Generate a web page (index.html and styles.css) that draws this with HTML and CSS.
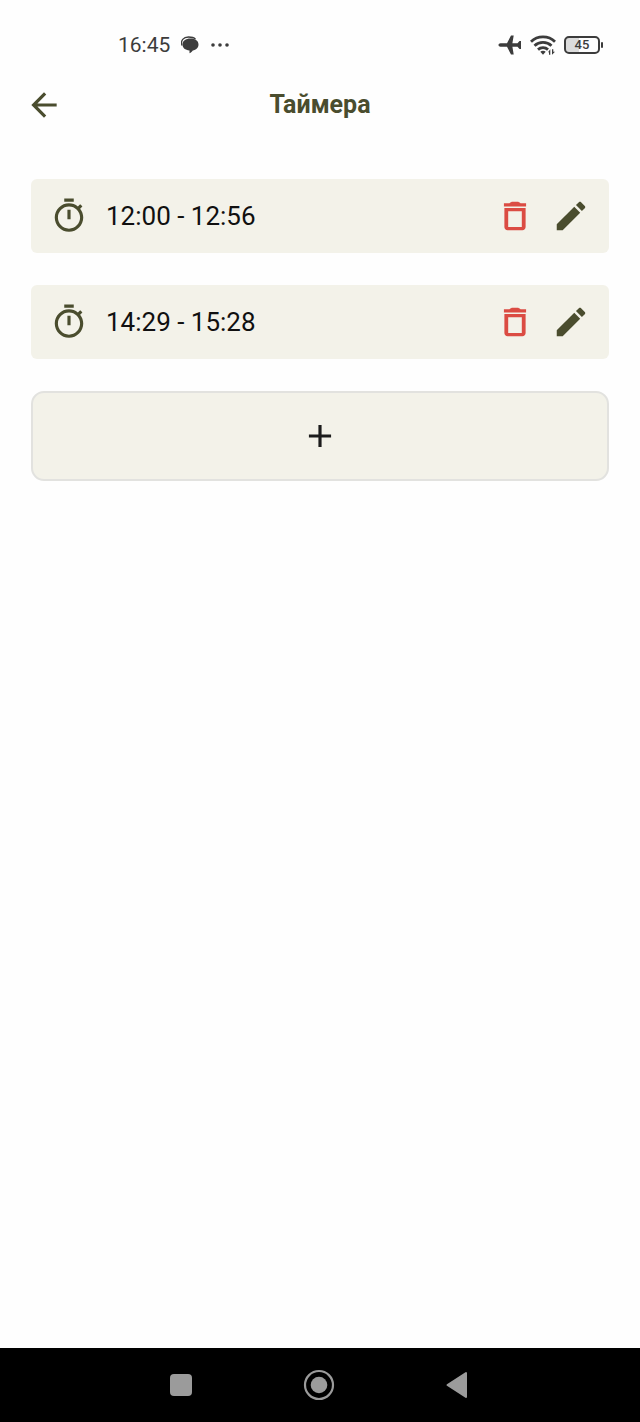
FILE: index.html
```html
<!DOCTYPE html>
<html lang="ru">
<head>
<meta charset="utf-8">
<meta name="viewport" content="width=device-width, initial-scale=1">
<title>Таймера</title>
<link rel="stylesheet" href="styles.css">
</head>
<body>
<div class="status">
  <div class="status-group">
    <span class="clock">16:45</span>
    <svg class="chat" viewBox="0 0 18 18" aria-hidden="true"><path d="M1 9.500C-.8 4.500 2.500 1 7.500 1c3 0 5.500.6 7 2.200" fill="none" stroke="#3c3c3c" stroke-width="1.300"/><path d="M9.500 2.500c4.900 0 8 2.500 8 5.900 0 3.200-2.400 5.400-5.700 6-.7.9-1.700 2-3.300 2.800v-2.800C4.200 14 1.500 11.800 1.500 8.400c0-3.400 3.100-5.900 8-5.900z" fill="#3c3c3c"/></svg>
    <svg class="dots" viewBox="0 0 20 6" fill="#3c3c3c" aria-hidden="true"><circle cx="3" cy="3" r="1.800"/><circle cx="10" cy="3" r="1.800"/><circle cx="17" cy="3" r="1.800"/></svg>
  </div>
  <div class="status-group status-right">
    <svg class="plane" viewBox="0 0 24 22" fill="#3c3c3c" aria-hidden="true"><path d="M.5 11c0-1 .9-1.700 2-1.700h6.500L13 1.500h2.700L14.400 9.300h5.100L21.500 7H23v8h-1.500l-2-2.300h-5.100l1.300 7.800H13L9 12.700H2.500C1.400 12.700.5 12 .5 11z"/></svg>
    <svg class="wifi" viewBox="0 0 26 20" aria-hidden="true"><g fill="none" stroke="#3c3c3c" stroke-width="2.800"><path d="M1 6.700C7.500.3 18.500.3 25 6.700"/><path d="M4.500 10.800c4.700-4.500 12.300-4.500 17 0"/><path d="M8 14.600c2.800-2.600 7.200-2.600 10 0"/></g><path d="M10.300 16.800c1.500-1.300 3.900-1.300 5.400 0L13 19.700z" fill="#3c3c3c"/><path d="M18 17.300l2.300-3v5.400h-1.300v-2.400zM22 14.300h1.300v2.400h1.700l-3 3z" fill="#3c3c3c"/></svg>
    <div class="battery"><span class="battery-body">45</span><span class="battery-tip"></span></div>
  </div>
</div>
<header class="header">
  <button class="icon-button" type="button" aria-label="Назад"><svg class="icon olive" viewBox="0 0 24 24"><path d="M20 11H7.830l5.590-5.590L12 4l-8 8 8 8 1.410-1.410L7.830 13H20v-2z"/></svg></button>
  <h1 class="title">Таймера</h1>
</header>
<main class="list">
  <section class="card">
    <svg class="icon olive" viewBox="0 0 24 24" aria-hidden="true"><path d="M15 1H9v2h6V1zm-4 13h2V8h-2v6zm8.030-6.610l1.420-1.420c-.43-.51-.9-.99-1.410-1.410l-1.420 1.420C16.070 4.740 14.120 4 12 4c-4.970 0-9 4.030-9 9s4.020 9 9 9 9-4.030 9-9c0-2.120-.74-4.070-1.970-5.610zM12 20c-3.870 0-7-3.130-7-7s3.130-7 7-7 7 3.130 7 7-3.130 7-7 7z"/></svg>
    <span class="time">12:00 - 12:56</span>
    <button class="icon-button" type="button" aria-label="Удалить"><svg class="icon red" viewBox="0 0 24 24"><path d="M5.300 19c0 1.100.9 2 2 2h9.400c1.100 0 2-.9 2-2V7H5.300v12zM7.700 9h8.600v10H7.700V9zm7.800-5c-.8-.7-1.200-1-2-1h-3c-.8 0-1.200.3-2 1H5v2h14V4h-3.500z"/></svg></button>
    <button class="icon-button" type="button" aria-label="Изменить"><svg class="icon olive" viewBox="0 0 24 24"><path d="M3 17.250V21h3.750L17.810 9.940l-3.750-3.750L3 17.250zM20.710 7.040c.39-.39.39-1.020 0-1.410l-2.340-2.340c-.39-.39-1.020-.39-1.410 0l-1.830 1.830 3.750 3.750 1.830-1.830z"/></svg></button>
  </section>
  <section class="card">
    <svg class="icon olive" viewBox="0 0 24 24" aria-hidden="true"><path d="M15 1H9v2h6V1zm-4 13h2V8h-2v6zm8.030-6.610l1.420-1.420c-.43-.51-.9-.99-1.410-1.410l-1.420 1.420C16.070 4.740 14.120 4 12 4c-4.970 0-9 4.030-9 9s4.020 9 9 9 9-4.030 9-9c0-2.120-.74-4.070-1.970-5.610zM12 20c-3.870 0-7-3.130-7-7s3.130-7 7-7 7 3.130 7 7-3.130 7-7 7z"/></svg>
    <span class="time">14:29 - 15:28</span>
    <button class="icon-button" type="button" aria-label="Удалить"><svg class="icon red" viewBox="0 0 24 24"><path d="M5.300 19c0 1.100.9 2 2 2h9.400c1.100 0 2-.9 2-2V7H5.300v12zM7.700 9h8.600v10H7.700V9zm7.800-5c-.8-.7-1.200-1-2-1h-3c-.8 0-1.200.3-2 1H5v2h14V4h-3.500z"/></svg></button>
    <button class="icon-button" type="button" aria-label="Изменить"><svg class="icon olive" viewBox="0 0 24 24"><path d="M3 17.250V21h3.750L17.810 9.940l-3.750-3.750L3 17.250zM20.710 7.040c.39-.39.39-1.020 0-1.410l-2.340-2.340c-.39-.39-1.020-.39-1.410 0l-1.830 1.830 3.750 3.750 1.830-1.830z"/></svg></button>
  </section>
  <button class="add" type="button" aria-label="Добавить"><svg class="icon" viewBox="0 0 24 24"><path d="M19 13h-6v6h-2v-6H5v-2h6V5h2v6h6v2z"/></svg></button>
</main>
<nav class="nav">
  <button class="icon-button" type="button" aria-label="Недавние"><svg class="nav-icon" viewBox="0 0 32 32"><rect x="5" y="5" width="22" height="22" rx="4"/></svg></button>
  <button class="icon-button" type="button" aria-label="Домой"><svg class="nav-icon" viewBox="0 0 32 32"><circle cx="16" cy="16" r="14" fill="none" stroke="#9b9b9b" stroke-width="2.200"/><circle cx="16" cy="16" r="8.300"/></svg></button>
  <button class="icon-button" type="button" aria-label="Назад"><svg class="nav-icon" viewBox="0 0 32 32"><path d="M6.500 16L25 4v24z" stroke="#9b9b9b" stroke-width="2" stroke-linejoin="round"/></svg></button>
</nav>
</body>
</html>
```
FILE: styles.css
```css
* {
  box-sizing: border-box;
}

body {
  margin: 0;
  min-height: 100vh;
  display: flex;
  flex-direction: column;
  background: #fefefe;
  color: #101010;
  font-family: Roboto, "Noto Sans", sans-serif;
}

.status {
  display: flex;
  justify-content: space-between;
  padding: 32px 37px 0 118px;
  color: #3c3c3c;
}

.status-group {
  display: flex;
  align-items: center;
  height: 26px;
  gap: 11px;
}

.status-right {
  gap: 8px;
}

.clock {
  font-size: 21px;
  line-height: 26px;
}

.chat {
  width: 18px;
  height: 18px;
}

.dots {
  width: 20px;
  height: 6px;
}

.plane {
  width: 24px;
  height: 22px;
}

.wifi {
  width: 26px;
  height: 20px;
}

.battery {
  display: flex;
  align-items: center;
  gap: 1px;
}

.battery-body {
  width: 36px;
  border: 2px solid #3c3c3c;
  border-radius: 5px;
  background: linear-gradient(90deg, #dcdcdc 40%, transparent 40%);
  font-size: 13px;
  font-weight: 500;
  line-height: 14px;
  text-align: center;
}

.battery-tip {
  width: 2px;
  height: 6px;
  border-radius: 1px;
  background: #3c3c3c;
}

.header {
  display: grid;
  grid-template-columns: 38px 1fr 38px;
  align-items: center;
  padding: 28px 25px 0;
}

.title {
  margin: 0;
  color: #4a4d2e;
  font-size: 25px;
  font-weight: 700;
  line-height: 38px;
  text-align: center;
}

.icon-button {
  display: flex;
  padding: 0;
  border: 0;
  background: none;
}

.icon {
  display: block;
  flex: none;
  width: 38px;
  height: 38px;
  fill: #1c1c1c;
}

.olive {
  fill: #4a4d2e;
}

.red {
  fill: #db4c43;
}

.list {
  flex: 1;
  display: flex;
  flex-direction: column;
  gap: 32px;
  padding: 55px 31px 32px;
}

.card {
  display: flex;
  align-items: center;
  gap: 18px;
  padding: 18px 19px;
  border-radius: 6px;
  background: #f3f2e9;
}

.time {
  flex: 1;
  font-size: 26px;
  line-height: 38px;
}

.add {
  display: flex;
  align-items: center;
  justify-content: center;
  padding: 24px;
  border: 2px solid #e2e2df;
  border-radius: 13px;
  background: #f3f2e9;
}

.nav {
  display: flex;
  justify-content: center;
  gap: 106px;
  padding: 21px 22px 21px 20px;
  background: #000;
}

.nav-icon {
  display: block;
  width: 32px;
  height: 32px;
  fill: #9b9b9b;
}
```
